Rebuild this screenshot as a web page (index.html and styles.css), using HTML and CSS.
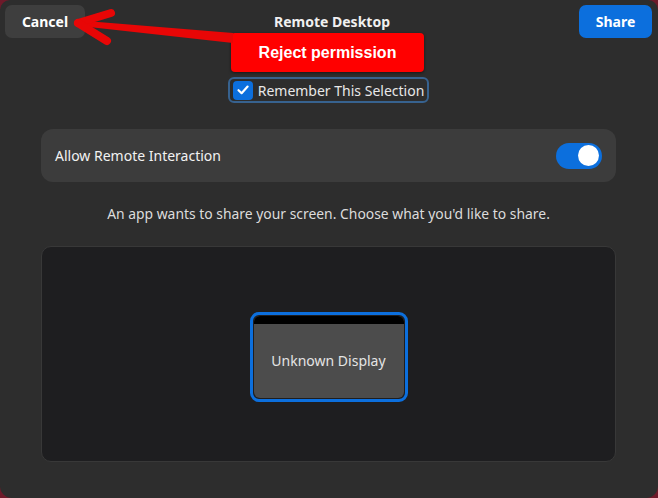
FILE: index.html
```html
<!DOCTYPE html>
<html>
<head>
<meta charset="utf-8">
<link rel="stylesheet" href="styles.css">
</head>
<body>
<div class="window">
  <header class="headerbar">
    <button class="btn cancel">Cancel</button>
    <div class="title">Remote Desktop</div>
    <button class="btn share">Share</button>
  </header>
  <main class="content">
    <label class="remember">
      <span class="check"><svg width="14" height="14" viewBox="0 0 14 14"><path d="M2.5 7.2 L5.6 10.2 L11.6 3.6" fill="none" stroke="#fff" stroke-width="2.2" stroke-linecap="round" stroke-linejoin="round"/></svg></span>
      <span>Remember This Selection</span>
    </label>
    <div class="card">
      <span class="card-label">Allow Remote Interaction</span>
      <span class="switch"><span class="knob"></span></span>
    </div>
    <p class="desc">An app wants to share your screen. Choose what you'd like to share.</p>
    <div class="panel">
      <div class="monitor">
        <div class="screen">
          <div class="screen-bar"></div>
          <div class="screen-body">Unknown Display</div>
        </div>
      </div>
    </div>
  </main>
  <div class="annotation">Reject permission</div>
  <svg class="arrow" width="658" height="80" viewBox="0 0 658 80">
    <polygon points="80,20.5 233,33 233,43 80,26" fill="#e80606"/>
    <line x1="78" y1="23" x2="111" y2="13" stroke="#e80606" stroke-width="8" stroke-linecap="round"/>
    <line x1="78" y1="23" x2="107" y2="41" stroke="#e80606" stroke-width="8" stroke-linecap="round"/>
  </svg>
</div>
</body>
</html>
```
FILE: styles.css
```css
* { box-sizing: border-box; }
html, body { margin: 0; padding: 0; }
body {
  width: 658px;
  height: 498px;
  background: #6e1a2a;
  font-family: "Noto Sans", "Open Sans", sans-serif;
  overflow: hidden;
}
.window {
  position: relative;
  width: 658px;
  height: 498px;
  background: #2d2d2d;
  border-radius: 10px 10px 12px 12px;
  display: flex;
  flex-direction: column;
}
.headerbar {
  height: 44px;
  padding: 5px 6px 0 5px;
  display: flex;
  align-items: flex-start;
  justify-content: space-between;
}
.btn {
  height: 33px;
  border: none;
  border-radius: 7px;
  font-family: inherit;
  font-weight: 700;
  font-size: 14px;
  color: #fff;
  padding: 0;
}
.cancel { width: 80px; background: #3e3e3e; }
.share { width: 73px; background: #0c6fdd; }
.title {
  margin-top: 7px;
  font-weight: 700;
  font-size: 14px;
  color: #f0f0f0;
}
.content {
  flex: 1;
  display: flex;
  flex-direction: column;
  align-items: center;
  padding: 33px 42px 36px 41px;
}
.remember {
  height: 26px;
  display: flex;
  align-items: center;
  gap: 5px;
  padding: 0 3px 0 3px;
  border: 2px solid #37628f;
  border-radius: 6px;
  font-size: 14px;
  color: #e8e8e8;
}
.check {
  width: 20px;
  height: 19px;
  border-radius: 4px;
  background: #0c6fdd;
  display: flex;
  align-items: center;
  justify-content: center;
}
.card {
  margin-top: 26px;
  align-self: stretch;
  height: 53px;
  background: #3c3c3c;
  border-radius: 12px;
  display: flex;
  align-items: center;
  justify-content: space-between;
  padding: 0 14px 0 14px;
}
.card-label { font-size: 14px; color: #f2f2f2; }
.switch {
  width: 46px;
  height: 26px;
  border-radius: 13px;
  background: #0c6fdd;
  display: flex;
  align-items: center;
  justify-content: flex-end;
  padding-right: 3px;
}
.knob {
  width: 21px;
  height: 21px;
  border-radius: 50%;
  background: #fff;
}
.desc {
  margin: 22px 0 0 0;
  height: 20px;
  line-height: 20px;
  font-size: 13.9px;
  color: #dcdcdc;
}
.panel {
  margin-top: 22px;
  align-self: stretch;
  flex: 1;
  background: #1e1e20;
  border: 1px solid #383838;
  border-radius: 10px;
  display: flex;
  align-items: center;
  justify-content: center;
  padding-top: 5px;
}
.monitor {
  width: 158px;
  height: 90px;
  border: 3px solid #0c6fdd;
  border-radius: 9px;
  padding: 1px;
}
.screen {
  width: 100%;
  height: 100%;
  border-radius: 6px;
  overflow: hidden;
  display: flex;
  flex-direction: column;
  background: #4c4c4c;
}
.screen-bar { height: 8px; background: #000; }
.screen-body {
  flex: 1;
  display: flex;
  align-items: center;
  justify-content: center;
  font-size: 14px;
  color: #e4e4e4;
}
.annotation {
  position: absolute;
  left: 231px;
  top: 33px;
  width: 193px;
  height: 39px;
  background: #ff0000;
  border-radius: 4px;
  box-shadow: 0 1px 3px rgba(0,0,0,0.5);
  color: #fff;
  font-family: "Liberation Sans", Arial, sans-serif;
  font-weight: 700;
  font-size: 16px;
  display: flex;
  align-items: center;
  justify-content: center;
}
.arrow {
  position: absolute;
  left: 0;
  top: 0;
  pointer-events: none;
}
```
